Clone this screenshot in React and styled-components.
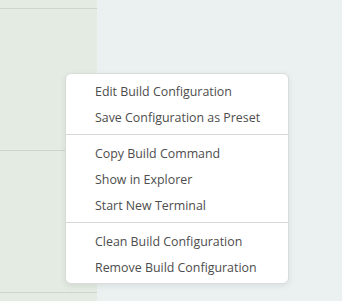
import React from 'react';
import styled, { createGlobalStyle } from 'styled-components';

const GlobalStyle = createGlobalStyle`
html, body {
  margin: 0;
  padding: 0;
  width: 342px;
  height: 301px;
  overflow: hidden;
  background: #ebf1f1;
  font-family: "Open Sans", "Noto Sans", sans-serif;
}
`;

const Screen = styled.div`
position: relative;
display: flex;
width: 342px;
height: 301px;
`;

const SidePanel = styled.div`
width: 97px;
height: 100%;
background: #e3ebe2;
display: flex;
flex-direction: column;
`;

const PanelRow = styled.div`
height: ${(p) => p.h}px;
border-bottom: 1px solid #cdd4cc;
flex-shrink: 0;
`;

const Workspace = styled.div`
flex: 1;
background: #ebf1f1;
`;

const Menu = styled.ul`
position: absolute;
left: 65px;
top: 73px;
width: 224px;
box-sizing: border-box;
margin: 0;
padding: 4px 0 3px;
list-style: none;
background: #fff;
border: 1px solid #dadcdc;
border-radius: 6px;
box-shadow: 0 2px 6px rgba(0, 0, 0, 0.08);
`;

const MenuItem = styled.li`
height: 26px;
display: flex;
align-items: center;
padding-left: 29px;
font-size: 12.4px;
color: #4d4d4d;
white-space: nowrap;
`;

const Divider = styled.li`
height: 1px;
margin: 4px 0 5px;
background: #d8d8d8;
`;

const groups = [
  ['Edit Build Configuration', 'Save Configuration as Preset'],
  ['Copy Build Command', 'Show in Explorer', 'Start New Terminal'],
  ['Clean Build Configuration', 'Remove Build Configuration'],
];

function App() {
  return (
    <>
      <GlobalStyle />
      <Screen>
        <SidePanel>
          <PanelRow h={8} />
          <PanelRow h={141} />
          <PanelRow h={141} />
        </SidePanel>
        <Workspace />
        <Menu>
          {groups.map((group, i) => (
            <React.Fragment key={group[0]}>
              {i > 0 && <Divider />}
              {group.map((label) => <MenuItem key={label}>{label}</MenuItem>)}
            </React.Fragment>
          ))}
        </Menu>
      </Screen>
    </>
  );
}

export default App;
